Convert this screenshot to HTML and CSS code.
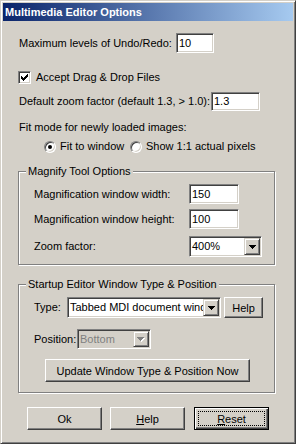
FILE: index.html
```html
<!DOCTYPE html>
<html lang="en">
<head>
  <meta charset="UTF-8" />
  <title>Multimedia Editor Options</title>
  <link rel="stylesheet" href="styles.css">
</head>
<body>
  <div class="window">
    <div class="titlebar">Multimedia Editor Options</div>

    <div class="content">
      <div class="row undo-row">
        <span class="label undo-label">Maximum levels of Undo/Redo:</span>
        <span class="field undo-field">10</span>
      </div>

      <div class="row drag-row">
        <span class="checkbox">
          <svg width="7" height="7" viewBox="0 0 7 7"><path d="M0 2h1v3H0zM1 3h1v3H1zM2 4h1v3H2zM3 3h1v3H3zM4 2h1v3H4zM5 1h1v3H5zM6 0h1v3H6z" fill="#000"/></svg>
        </span>
        <span class="label">Accept Drag &amp; Drop Files</span>
      </div>

      <div class="row zoom-row">
        <span class="label zoom-label">Default zoom factor (default 1.3, &gt; 1.0):</span>
        <span class="field zoom-field">1.3</span>
      </div>

      <div class="fit-title">Fit mode for newly loaded images:</div>
      <div class="row radio-row">
        <span class="radio-opt first-opt"><span class="radio checked"></span>Fit to window</span>
        <span class="radio-opt"><span class="radio"></span>Show 1:1 actual pixels</span>
      </div>

      <fieldset class="group magnify">
        <legend>Magnify Tool Options</legend>
        <div class="row grp-row first-grp">
          <span class="label grp-label">Magnification window width:</span>
          <span class="field mag-field">150</span>
        </div>
        <div class="row grp-row height-row">
          <span class="label grp-label">Magnification window height:</span>
          <span class="field mag-field">100</span>
        </div>
        <div class="row grp-row factor-row">
          <span class="label grp-label">Zoom factor:</span>
          <span class="combo factor-combo">
            <span class="combo-text">400%</span>
            <span class="combo-btn"><svg width="7" height="4" viewBox="0 0 7 4"><path d="M0 0h7v1H0zM1 1h5v1H1zM2 2h3v1H2zM3 3h1v1H3z" fill="#000"/></svg></span>
          </span>
        </div>
      </fieldset>

      <fieldset class="group startup">
        <legend>Startup Editor Window Type &amp; Position</legend>
        <div class="row grp-row type-row">
          <span class="label type-label">Type:</span>
          <span class="combo type-combo">
            <span class="combo-text">Tabbed MDI document window</span>
            <span class="combo-btn"><svg width="7" height="4" viewBox="0 0 7 4"><path d="M0 0h7v1H0zM1 1h5v1H1zM2 2h3v1H2zM3 3h1v1H3z" fill="#000"/></svg></span>
          </span>
          <span class="btn help-small">Help</span>
        </div>
        <div class="row grp-row pos-row">
          <span class="label pos-label">Position:</span>
          <span class="combo pos-combo disabled">
            <span class="combo-text">Bottom</span>
            <span class="combo-btn"><svg width="8" height="5" viewBox="0 0 8 5"><path d="M1 1h7v1H1zM2 2h5v1H2zM3 3h3v1H3zM4 4h1v1H4z" fill="#fff"/><path d="M0 0h7v1H0zM1 1h5v1H1zM2 2h3v1H2zM3 3h1v1H3z" fill="#808080"/></svg></span>
          </span>
        </div>
        <div class="row grp-row update-row">
          <span class="btn update-btn">Update Window Type &amp; Position Now</span>
        </div>
      </fieldset>

      <div class="row footer">
        <span class="btn dlg-btn">Ok</span>
        <span class="btn dlg-btn"><u>H</u>elp</span>
        <span class="btn dlg-btn default"><span class="focus"></span><u>R</u>eset</span>
      </div>
    </div>
  </div>
</body>
</html>
```

FILE: styles.css
```css
* {
  box-sizing: border-box;
}
body {
  margin: 0;
  background: #d4d0c8;
  font-family: "Liberation Sans", Arial, sans-serif;
  font-size: 11px;
  color: #000;
}
.window {
  width: 296px;
  height: 444px;
  padding: 2px;
  background: #d4d0c8;
  border: 1px solid;
  border-color: #d4d0c8 #404040 #404040 #d4d0c8;
  box-shadow: inset 1px 1px #fff, inset -1px -1px #808080;
}
.titlebar {
  height: 18px;
  padding-left: 2px;
  line-height: 18px;
  font-weight: bold;
  color: #fff;
  background: linear-gradient(to right, #0a246a, #a6caf0);
}
.content {
  padding-left: 16px;
}
.row {
  display: flex;
  align-items: center;
}
.label {
  line-height: 13px;
  white-space: nowrap;
}

/* sunken edit box */
.field {
  height: 20px;
  padding-left: 2px;
  line-height: 18px;
  background: #fff;
  border: 1px solid;
  border-color: #808080 #fff #fff #808080;
  box-shadow: inset 1px 1px #404040, inset -1px -1px #d4d0c8;
}

.undo-row {
  margin-top: 12px;
  height: 20px;
}
.undo-label {
  width: 157px;
}
.undo-field {
  width: 38px;
}

.drag-row {
  margin-top: 18px;
  height: 13px;
}
.checkbox {
  width: 13px;
  height: 13px;
  margin-left: -1px;
  margin-right: 5px;
  display: flex;
  align-items: center;
  justify-content: center;
  background: #fff;
  border: 1px solid;
  border-color: #808080 #fff #fff #808080;
  box-shadow: inset 1px 1px #404040, inset -1px -1px #d4d0c8;
}

.zoom-row {
  margin-top: 8px;
  height: 19px;
}
.zoom-label {
  width: 192px;
}
.zoom-field {
  width: 49px;
  height: 19px;
  line-height: 17px;
}

.fit-title {
  margin-top: 10px;
  line-height: 13px;
}
.radio-row {
  margin-top: 6px;
  height: 13px;
  padding-left: 25px;
}
.radio-opt {
  display: flex;
  align-items: center;
  line-height: 13px;
  white-space: nowrap;
}
.first-opt {
  width: 86px;
}
.radio {
  position: relative;
  width: 12px;
  height: 12px;
  margin-right: 4px;
  border-radius: 50%;
  background: #fff;
  border: 1px solid;
  border-color: #808080 #fff #fff #808080;
  box-shadow: inset 1px 1px #404040, inset -1px -1px #d4d0c8;
}
.radio.checked::after {
  content: "";
  position: absolute;
  left: 3px;
  top: 3px;
  width: 4px;
  height: 4px;
  border-radius: 50%;
  background: #000;
}

/* etched group box */
.group {
  margin: 0 0 0 -1px;
  width: 257px;
  padding: 0 0 0 7px;
  border: 1px solid #808080;
  box-shadow: inset 1px 1px #fff, 1px 1px #fff;
}
.group legend {
  padding: 0 2px;
  line-height: 13px;
  background: #d4d0c8;
}
.magnify {
  margin-top: 12px;
  padding-bottom: 7px;
}
.startup {
  margin-top: 13px;
  padding-bottom: 10px;
}
.grp-row {
  padding-left: 8px;
}
.grp-label {
  width: 155px;
}
.first-grp {
  margin-top: 6px;
  height: 20px;
}
.height-row {
  margin-top: 5px;
  height: 20px;
}
.factor-row {
  margin-top: 7px;
  height: 21px;
}
.mag-field {
  width: 50px;
}

/* combo box */
.combo {
  display: flex;
  height: 21px;
  padding: 1px;
  background: #fff;
  border: 1px solid;
  border-color: #808080 #fff #fff #808080;
  box-shadow: inset 1px 1px #404040, inset -1px -1px #d4d0c8;
}
.combo-text {
  flex: 1;
  padding-left: 1px;
  line-height: 17px;
  white-space: nowrap;
  overflow: hidden;
}
.combo-btn {
  width: 16px;
  display: flex;
  align-items: center;
  justify-content: center;
  background: #d4d0c8;
  border: 1px solid;
  border-color: #d4d0c8 #404040 #404040 #d4d0c8;
  box-shadow: inset 1px 1px #fff, inset -1px -1px #808080;
}
.factor-combo {
  width: 73px;
}
.type-row {
  margin-top: 6px;
  height: 21px;
}
.type-label {
  width: 33px;
}
.type-combo {
  width: 154px;
}
.pos-row {
  margin-top: 11px;
  height: 20px;
}
.pos-label {
  width: 43px;
}
.pos-combo {
  width: 74px;
  height: 20px;
}
.combo.disabled {
  background: #d4d0c8;
  color: #808080;
}
.combo.disabled .combo-text {
  line-height: 16px;
}

/* raised push button */
.btn {
  position: relative;
  display: flex;
  align-items: center;
  justify-content: center;
  background: #d4d0c8;
  border: 1px solid;
  border-color: #fff #404040 #404040 #fff;
  box-shadow: inset -1px -1px #808080;
  white-space: nowrap;
}
.help-small {
  width: 39px;
  height: 21px;
  margin-left: 3px;
}
.update-row {
  margin-top: 10px;
  padding-left: 19px;
}
.update-btn {
  width: 205px;
  height: 23px;
}
.footer {
  margin-top: 14px;
  padding-left: 8px;
  gap: 8px;
}
.dlg-btn {
  width: 75px;
  height: 23px;
}
.dlg-btn.default {
  margin-left: 1px;
  border-color: #000;
  box-shadow: inset 1px 1px #fff, inset -1px -1px #404040, inset -2px -2px #808080;
}
.focus {
  position: absolute;
  left: 3px;
  top: 3px;
  right: 3px;
  bottom: 3px;
  border: 1px dotted #000;
}
```
